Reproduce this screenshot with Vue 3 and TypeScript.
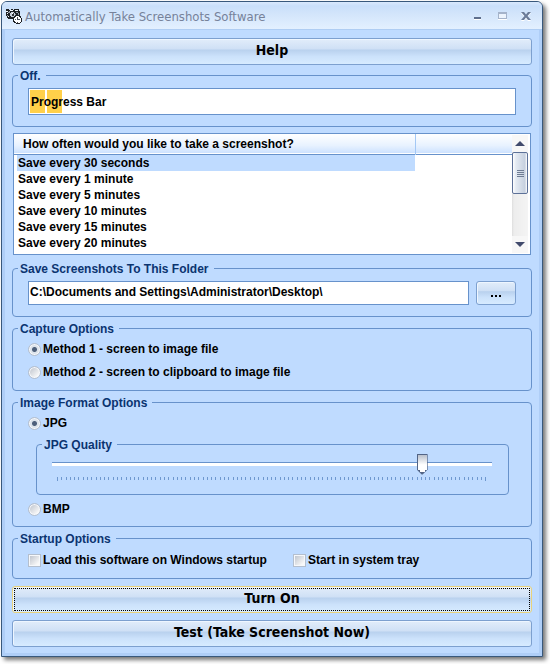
<script setup lang="ts">
import { computed, ref } from 'vue'

const intervals: string[] = [
  'Save every 30 seconds',
  'Save every 1 minute',
  'Save every 5 minutes',
  'Save every 10 minutes',
  'Save every 15 minutes',
  'Save every 20 minutes',
]

const selected = ref(0)
const folder = ref('C:\\Documents and Settings\\Administrator\\Desktop\\')
const method = ref<'file' | 'clipboard'>('file')
const format = ref<'jpg' | 'bmp'>('jpg')
const quality = ref(85)
const loadOnStartup = ref(false)
const startInTray = ref(false)
const running = ref(false)

const tickCount = 101
const progressBlocks = 2
const status = computed(() => (running.value ? 'On.' : 'Off.'))
</script>

<template>
  <main class="window">
    <header class="titlebar">
      <svg class="app-icon" viewBox="0 0 18 18" aria-hidden="true" shape-rendering="crispEdges">
        <path d="M1 2h3v1h2V2h2v1h1V2h5v2h1v5H9v3H3v-1H2V9H1z" fill="#1d2024" />
        <path d="M1 4h2v1H1zM5 3h3v1H5zM2 6h1v1H2zM3 9h1v1H3zM10 3h3v1h-3z" fill="#f2f6fb" />
        <path d="M3 5h2v1H3zM4 4h1v1H4zM11 5h2v1h-2zM13 6h1v2h-1zM2 8h1v1H2zM10 7h1v1h-1z" fill="#8e97a3" />
        <path d="M6 5h3v1h1v3H9v1H6V9H5V6h1z" fill="#c9d0da" />
        <path d="M7 6h2v3H7z" fill="#30343a" />
        <path d="M7 6h1v1H7z" fill="#fff" />
        <path d="M11 8h3v1h2v2h1v4h-1v1h-1v1h-4v-1H9v-1H8v-4h1V9h2z" fill="#1d2024" />
        <path d="M11 9h3v1h1v1h1v4h-1v1h-4v-1h-1v-1H9v-3h1v-1h1z" fill="#fff" />
        <path d="M12 10h1v3h-1zM13 12h2v1h-2zM10 12h1v1h-1zM12 15h1v1h-1z" fill="#4b5058" />
      </svg>
      <h1>Automatically Take Screenshots Software</h1>
      <div class="controls">
        <button type="button" aria-label="Minimize">
          <svg viewBox="0 0 12 12" shape-rendering="crispEdges"><path d="M2 9h7v1H2z" fill="#fff" /><path d="M2 7h7v2H2z" fill="#5f6f8d" /></svg>
        </button>
        <button type="button" aria-label="Maximize">
          <svg viewBox="0 0 12 12" shape-rendering="crispEdges"><path d="M2 2h9v7H2z" fill="#a5b3ca" /><path d="M3 4h7v4H3z" fill="#edf4fd" /><path d="M2 9h9v1H2z" fill="#fff" /></svg>
        </button>
        <button type="button" aria-label="Close">
          <svg viewBox="0 0 12 12"><path d="M1 3h3l2 2.500L8 3h3L7.500 7l3.500 4H8L6 8.500 4 11H1l3.500-4z" fill="#fff" /><path d="M1 2h3l2 2.500L8 2h3L7.500 6l3.500 4H8L6 7.500 4 10H1l3.500-4z" fill="#6b7b98" /></svg>
        </button>
      </div>
    </header>

    <form class="content" @submit.prevent>
      <button type="button" class="button wide">Help</button>

      <fieldset class="group progress-group">
        <legend>{{ status }}</legend>
        <div class="progress" role="progressbar" aria-label="Progress Bar">
          <div class="blocks"><i v-for="n in progressBlocks" :key="n"></i></div>
          <span>Progress Bar</span>
        </div>
      </fieldset>

      <div class="list">
        <table>
          <thead>
            <tr>
              <th scope="col">How often would you like to take a screenshot?</th>
              <td></td>
            </tr>
          </thead>
          <tbody>
            <tr v-for="(label, i) in intervals" :key="label" :class="{ selected: i === selected }" @click="selected = i">
              <td><span>{{ label }}</span></td>
              <td></td>
            </tr>
          </tbody>
        </table>
        <div class="scrollbar">
          <button type="button" aria-label="Scroll up">
            <svg viewBox="0 0 10 5"><path d="M5 0l5 5H0z" fill="#414b6c" /></svg>
          </button>
          <div class="thumb"><i v-for="n in 4" :key="n"></i></div>
          <button type="button" class="down" aria-label="Scroll down">
            <svg viewBox="0 0 10 5"><path d="M0 0h10L5 5z" fill="#414b6c" /></svg>
          </button>
        </div>
      </div>

      <fieldset class="group folder-group">
        <legend>Save Screenshots To This Folder</legend>
        <div class="folder">
          <input v-model="folder" type="text" aria-label="Save Screenshots To This Folder" />
          <button type="button" class="button browse" aria-label="Browse"><i></i><i></i><i></i></button>
        </div>
      </fieldset>

      <fieldset class="group">
        <legend>Capture Options</legend>
        <label class="option"><input v-model="method" type="radio" name="method" value="file" />Method 1 - screen to image file</label>
        <label class="option"><input v-model="method" type="radio" name="method" value="clipboard" />Method 2 - screen to clipboard to image file</label>
      </fieldset>

      <fieldset class="group format-group">
        <legend>Image Format Options</legend>
        <label class="option"><input v-model="format" type="radio" name="format" value="jpg" />JPG</label>
        <fieldset class="group quality">
          <legend>JPG Quality</legend>
          <input v-model.number="quality" type="range" min="0" max="100" aria-label="JPG Quality" />
          <div class="ticks"><i v-for="n in tickCount" :key="n"></i></div>
        </fieldset>
        <label class="option"><input v-model="format" type="radio" name="format" value="bmp" />BMP</label>
      </fieldset>

      <fieldset class="group startup-group">
        <legend>Startup Options</legend>
        <div class="startup">
          <label class="option"><input v-model="loadOnStartup" type="checkbox" />Load this software on Windows startup</label>
          <label class="option"><input v-model="startInTray" type="checkbox" />Start in system tray</label>
        </div>
      </fieldset>

      <div class="actions">
        <button type="button" class="button wide default" @click="running = !running">{{ running ? 'Turn Off' : 'Turn On' }}</button>
        <button type="button" class="button wide">Test (Take Screenshot Now)</button>
      </div>
    </form>
  </main>
</template>

<style>
body {
  background: #fff;
}
</style>

<style scoped>
* {
  box-sizing: border-box;
}

.window {
  margin: 1px 7px 7px 1px;
  border: 1px solid #38587c;
  border-radius: 6px 6px 0 0;
  background: #bfdbff;
  box-shadow: 3px 3px 4px #777;
  font: bold 12px/16px "Liberation Sans", Arial, sans-serif;
  color: #000;
  overflow: hidden;
}

.titlebar {
  display: flex;
  align-items: center;
  height: 28px;
  padding: 0 4px 0 3px;
  border-bottom: 1px solid #afcdf3;
  background: linear-gradient(#d9e9fd, #c9dffa 4px, #d3e5fb 12px, #e3f0ff);
}

.app-icon {
  width: 18px;
  height: 18px;
}

h1 {
  flex: 1;
  margin: 0 0 0 2px;
  padding-top: 2px;
  font: 13px/20px "DejaVu Sans Condensed", "DejaVu Sans", sans-serif;
  color: #76829a;
  white-space: nowrap;
}

.controls {
  display: flex;
}

.controls button {
  display: grid;
  place-items: center;
  width: 24px;
  height: 20px;
  padding: 0;
  border: 0;
  background: none;
}

.controls svg {
  width: 12px;
  height: 12px;
}

.content {
  display: flex;
  flex-direction: column;
  gap: 4px;
  padding: 8px 10px 9px;
  box-shadow: inset 3px -3px #afcef7, inset -3px 0 #afcef7;
}

.button {
  border: 1px solid #7da0cf;
  border-radius: 3px;
  background: linear-gradient(#e2edfa, #cfe0f5 40%, #b9d1ee 44%, #cce2fb 70%, #d7ebff);
  box-shadow: inset 1px 1px #eef6ff;
  color: #000;
}

.wide {
  width: 100%;
  height: 27px;
  padding: 0 0 2px;
  font: bold 14px/23px "DejaVu Sans Condensed", "DejaVu Sans", sans-serif;
}

.group {
  min-width: 0;
  margin: 0;
  padding: 2px 15px 6px;
  border: 1px solid #6792cb;
  border-radius: 4px;
}

.group legend {
  height: 15px;
  margin-left: -10px;
  padding: 0 5px 0 2px;
  line-height: 17px;
  color: #0b3470;
}

.progress-group,
.folder-group {
  padding-top: 5px;
  padding-bottom: 11px;
}

.progress-group {
  margin-top: -1px;
}

.progress {
  display: grid;
  align-items: center;
  height: 27px;
  border: 1px solid #6792cb;
  background: #fff;
}

.progress > * {
  grid-area: 1 / 1;
}

.progress span {
  padding-left: 2px;
}

.blocks {
  display: flex;
  gap: 2px;
  padding-left: 1px;
}

.blocks i {
  width: 15px;
  height: 23px;
  background: #ffd04a;
}

.list {
  display: flex;
  margin: 2px 1px;
  border: 1px solid #6792cb;
  background: #fff;
}

table {
  flex: 1;
  border-collapse: collapse;
}

td,
th {
  height: 16px;
  padding: 0;
  text-align: left;
}

th:first-child {
  width: 401px;
  padding-left: 9px;
  border-right: 1px solid #a3c8f5;
}

thead tr {
  height: 20px;
  border-bottom: 1px solid #6792cb;
  background: linear-gradient(#fff, #e8f2ff 60%, #cde2ff);
}

tbody td:first-child {
  padding-left: 3px;
}

tbody span {
  display: block;
  padding-left: 1px;
}

.selected span {
  background: #bfdbff;
}

tbody::after {
  content: "";
  display: block;
  height: 3px;
}

.scrollbar {
  display: flex;
  flex-direction: column;
  width: 16px;
  margin: 1px 2px 1px 0;
  background: linear-gradient(90deg, #dedede, #ededed 2px, #f4f4f4);
}

.scrollbar button {
  display: grid;
  place-items: center;
  height: 17px;
  padding: 0;
  border: 0;
  background: #f7f7f7;
}

.scrollbar .down {
  margin-top: auto;
}

.scrollbar svg {
  width: 10px;
  height: 5px;
}

.thumb {
  display: flex;
  flex-direction: column;
  align-items: center;
  justify-content: center;
  gap: 1px;
  height: 42px;
  border: 1px solid #5d7198;
  border-radius: 2px;
  background: linear-gradient(90deg, #fff, #e5ebf3 20%, #c6d0df 85%, #fff);
}

.thumb i {
  width: 7px;
  height: 1px;
  background: #6f7c93;
}

.folder {
  display: flex;
  gap: 7px;
}

.folder input {
  flex: 1;
  min-width: 0;
  height: 24px;
  padding: 0 0 2px 1px;
  border: 1px solid #6792cb;
  background: #fff;
  font: inherit;
  color: #000;
  outline: none;
}

.browse {
  display: flex;
  align-items: flex-end;
  justify-content: center;
  gap: 2px;
  width: 40px;
  height: 24px;
  padding: 0 0 7px;
}

.browse i {
  width: 2px;
  height: 2px;
  background: #000;
}

.option {
  display: flex;
  align-items: center;
  gap: 2px;
  width: max-content;
  height: 23px;
}

.option input {
  appearance: none;
  width: 13px;
  height: 13px;
  margin: 0;
  border: 1px solid #b4bfce;
  background: linear-gradient(135deg, #b9bfc9, #f8f8f8 80%);
  box-shadow: inset 0 0 0 1px #f6f8fb;
}

.option input[type="radio"] {
  border-radius: 50%;
}

.option input:checked {
  background: radial-gradient(circle, #4e607b 2px, #dce3eb 3px);
}

.format-group {
  padding-bottom: 5px;
}

.group.quality {
  margin: 2px 7px 3px 8px;
  padding: 2px 16px 13px 15px;
}

.quality input {
  appearance: none;
  display: block;
  width: 100%;
  height: 21px;
  margin: 0;
  background: linear-gradient(#6792cb, #6792cb) 0 8px / 100% 1px no-repeat, linear-gradient(#fff, #fff) 0 9px / 100% 3px no-repeat;
}

.quality input::-webkit-slider-thumb {
  appearance: none;
  width: 11px;
  height: 21px;
  background:
    linear-gradient(#b9c0cc, #fff 65%) 1px 1px / 9px 15px no-repeat,
    linear-gradient(#fff, #fff) 3px 16px / 5px 2px no-repeat,
    #526486;
  clip-path: polygon(0 1px, 1px 0, 10px 0, 11px 1px, 11px 16px, 6px 21px, 5px 21px, 0 16px);
}

.ticks {
  display: flex;
  justify-content: space-between;
  height: 4px;
  margin: 2px 5px 0;
}

.ticks i {
  width: 1px;
  height: 3px;
  background: #6f98cf;
}

.ticks i:first-child,
.ticks i:last-child {
  height: 4px;
}

.startup-group {
  padding-top: 3px;
}

.startup {
  display: flex;
  gap: 26px;
}

.actions {
  display: flex;
  flex-direction: column;
  gap: 7px;
  margin-top: 3px;
}

.default {
  border-color: #e8d27c;
  outline: 1px dotted #000;
  outline-offset: -3px;
}
</style>
